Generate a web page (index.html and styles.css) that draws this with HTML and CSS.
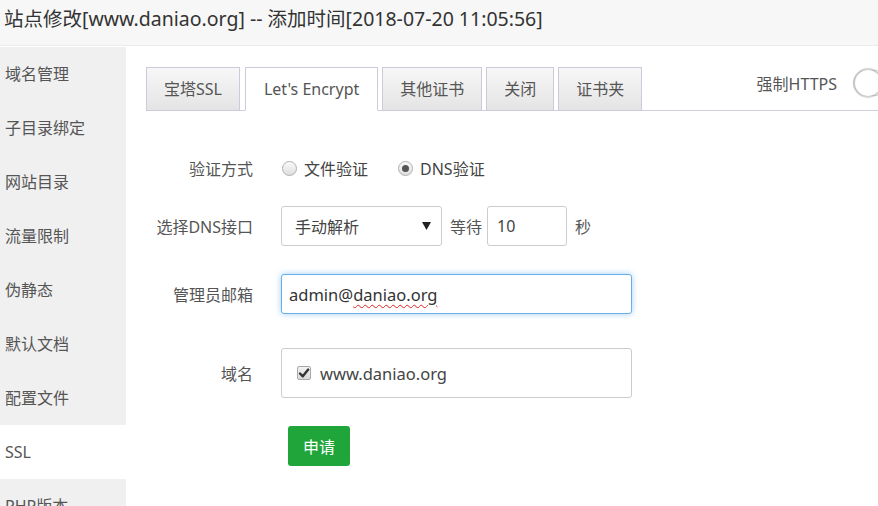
FILE: index.html
```html
<!DOCTYPE html>
<html lang="zh-CN">
<head>
<meta charset="utf-8">
<title>站点修改</title>
<link rel="stylesheet" href="styles.css">
</head>
<body>
<div class="page">
  <header class="title">站点修改[www.daniao.org] -- 添加时间[2018-07-20 11:05:56]</header>
  <div class="main">
    <nav class="side">
      <div class="side-item">域名管理</div>
      <div class="side-item">子目录绑定</div>
      <div class="side-item">网站目录</div>
      <div class="side-item">流量限制</div>
      <div class="side-item">伪静态</div>
      <div class="side-item">默认文档</div>
      <div class="side-item">配置文件</div>
      <div class="side-item active">SSL</div>
      <div class="side-item">PHP版本</div>
    </nav>
    <section class="content">
      <div class="tabbar">
        <div class="tabs">
          <span class="tab">宝塔SSL</span>
          <span class="tab active">Let's Encrypt</span>
          <span class="tab">其他证书</span>
          <span class="tab">关闭</span>
          <span class="tab">证书夹</span>
        </div>
        <div class="https">
          <span class="https-label">强制HTTPS</span>
          <span class="switch"><span class="knob"></span></span>
        </div>
      </div>
      <div class="form">
        <div class="row row-verify">
          <span class="label">验证方式</span>
          <div class="radios">
            <span class="radio"><span class="dot"></span>文件验证</span>
            <span class="radio checked"><span class="dot"></span>DNS验证</span>
          </div>
        </div>
        <div class="row row-dns">
          <span class="label">选择DNS接口</span>
          <div class="select"><span>手动解析</span>
            <svg class="caret" width="9" height="8" viewBox="0 0 9 8"><polygon points="0,0 9,0 4.5,8" fill="#222"/></svg>
          </div>
          <span class="wait">等待</span>
          <div class="input small">10</div>
          <span class="sec">秒</span>
        </div>
        <div class="row row-mail">
          <span class="label">管理员邮箱</span>
          <div class="input wide focus">admin@<span class="misspelled">daniao.org</span></div>
        </div>
        <div class="row row-domain">
          <span class="label">域名</span>
          <div class="domain-box">
            <span class="checkbox"><svg width="12" height="12" viewBox="0 0 12 12"><path d="M2 6.5 L4.8 9.3 L10.2 2.6" fill="none" stroke="#333" stroke-width="2.4" stroke-linecap="round" stroke-linejoin="round"/></svg></span>
            <span>www.daniao.org</span>
          </div>
        </div>
        <div class="row row-btn">
          <span class="label"></span>
          <button class="btn" type="button">申请</button>
        </div>
      </div>
    </section>
  </div>
</div>
</body>
</html>
```

FILE: styles.css
```css
html, body {
  margin: 0;
  padding: 0;
  overflow: hidden;
  background: #fff;
}
body {
  font-family: "Noto Sans", "Noto Sans CJK SC", sans-serif;
  font-size: 16px;
  color: #555;
}
.page {
  width: 903px;
  height: 506px;
  overflow: hidden;
  display: flex;
  flex-direction: column;
}
.title {
  height: 46px;
  box-sizing: border-box;
  padding: 0 0 0 4px;
  line-height: 38px;
  font-size: 19.5px;
  color: #333;
  background: #f7f7f7;
  border-bottom: 1px solid #ececec;
  flex: none;
  white-space: nowrap;
}
.main {
  display: flex;
  flex: 1;
  padding-top: 1px;
}
.side {
  width: 126px;
  flex: none;
  background: #f0f0f0;
}
.side-item {
  height: 54px;
  line-height: 54px;
  padding-left: 5px;
  white-space: nowrap;
}
.side-item.active {
  background: #fff;
}
.content {
  flex: 1;
  padding: 20px 0 0 20px;
}
.tabbar {
  display: flex;
  border-bottom: 1px solid #cfcfdf;
  height: 43px;
}
.tabs {
  display: flex;
  gap: 4px;
}
.tab {
  height: 44px;
  box-sizing: border-box;
  padding: 0 17px;
  border: 1px solid #cbcbdc;
  line-height: 42px;
  background: linear-gradient(to bottom, #f7f7f7, #e4e4e4);
  color: #555;
  white-space: nowrap;
}
.tab:first-child {
  margin-right: 1px;
}
.tab.active {
  padding: 0 18px;
  background: #fff;
  border-bottom-color: #fff;
}
.https {
  margin-left: auto;
  height: 32px;
  display: flex;
  align-items: center;
  gap: 16px;
}
.https-label {
  color: #555;
}
.switch {
  width: 50px;
  height: 26px;
  box-sizing: border-box;
  border: 1px solid #e2e2e2;
  border-radius: 14px;
  background: #fafafa;
  position: relative;
}
.knob {
  position: absolute;
  left: 1px;
  top: -1px;
  width: 26px;
  height: 26px;
  border-radius: 50%;
  background: #fff;
  box-shadow: 0 0 1px 2px rgba(0,0,0,0.18), inset 0 0 1px rgba(0,0,0,0.1);
}
.form {
  display: flex;
  flex-direction: column;
}
.row {
  display: flex;
  align-items: center;
  height: 40px;
}
.row-verify { margin-top: 37px; }
.row-dns { margin-top: 18px; }
.row-mail { margin-top: 28px; }
.row-domain { margin-top: 34px; height: 50px; }
.row-btn { margin-top: 28px; }
.label {
  width: 107px;
  margin-right: 28px;
  text-align: right;
  flex: none;
  color: #555;
  white-space: nowrap;
}
.radios {
  display: flex;
  align-items: center;
  gap: 29px;
}
.radio {
  display: flex;
  align-items: center;
  gap: 7px;
  color: #444;
}
.dot {
  width: 15px;
  height: 15px;
  margin-left: 1px;
  box-sizing: border-box;
  border-radius: 50%;
  border: 1px solid #b0b0b0;
  background: linear-gradient(to bottom, #fafafa, #dedede);
  display: flex;
  align-items: center;
  justify-content: center;
}
.radio.checked .dot::after {
  content: "";
  width: 7px;
  height: 7px;
  border-radius: 50%;
  background: #555;
}
.select {
  width: 161px;
  height: 40px;
  box-sizing: border-box;
  border: 1px solid #ccc;
  border-radius: 3px;
  padding: 0 10px 0 13px;
  display: flex;
  align-items: center;
  justify-content: space-between;
  color: #444;
  background: #fff;
}
.wait {
  margin: 0 5px 0 8px;
}
.input {
  height: 40px;
  box-sizing: border-box;
  border: 1px solid #ccc;
  border-radius: 3px;
  display: flex;
  align-items: center;
  color: #444;
  background: #fff;
  white-space: pre;
}
.input.small {
  width: 80px;
  padding-left: 9px;
}
.sec {
  margin-left: 8px;
}
.input.wide {
  width: 351px;
  padding-left: 7px;
  font-size: 16.5px;
  color: #333;
}
.input.focus {
  border-color: #66afe9;
  box-shadow: 0 0 6px rgba(102,175,233,0.6);
}
.misspelled {
  text-decoration: underline wavy #e02020;
  text-decoration-thickness: 1px;
  text-underline-offset: 3px;
}
.domain-box {
  width: 351px;
  height: 50px;
  box-sizing: border-box;
  border: 1px solid #ccc;
  border-radius: 3px;
  padding-left: 15px;
  display: flex;
  align-items: center;
  gap: 9px;
  color: #444;
  font-size: 16.5px;
}
.checkbox {
  width: 14px;
  height: 14px;
  box-sizing: border-box;
  border: 1px solid #aaa;
  border-radius: 2px;
  background: linear-gradient(to bottom, #f2f2f2, #d8d8d8);
  display: flex;
  align-items: center;
  justify-content: center;
}
.btn {
  margin-left: 7px;
  width: 62px;
  height: 40px;
  border: none;
  border-radius: 3px;
  background: #20a53a;
  color: #fff;
  font-family: inherit;
  font-size: 16px;
  padding: 0;
}
```
